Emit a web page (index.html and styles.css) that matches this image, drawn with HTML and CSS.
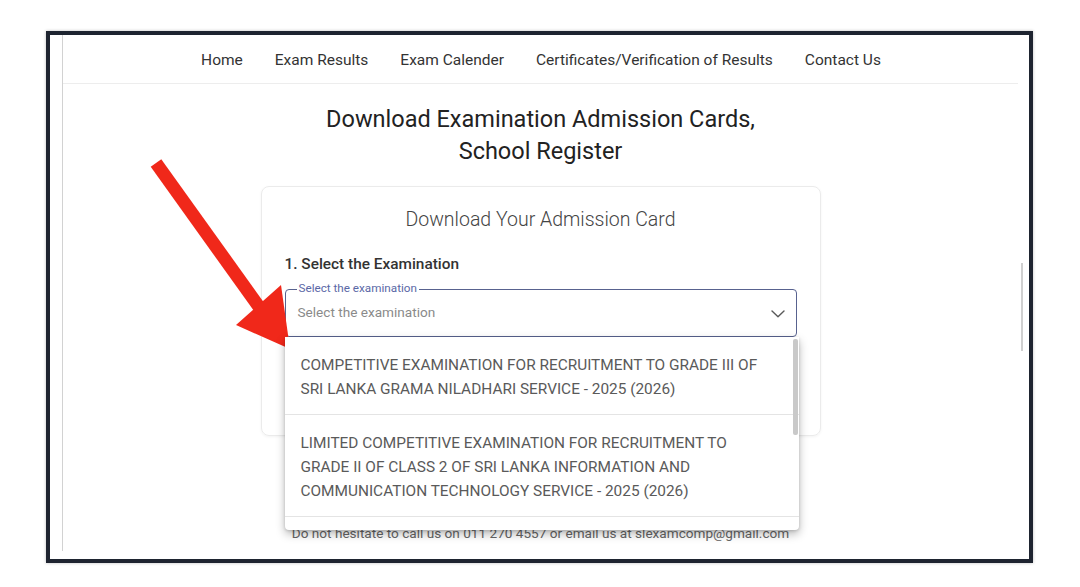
FILE: index.html
```html
<!DOCTYPE html>
<html lang="en">
<head>
<meta charset="utf-8">
<title>Download Examination Admission Cards</title>
<link rel="stylesheet" href="styles.css">
</head>
<body>
<div class="frame">
  <div class="gutter"></div>
  <div class="page">
    <nav class="nav">
      <a>Home</a>
      <a>Exam Results</a>
      <a>Exam Calender</a>
      <a>Certificates/Verification of Results</a>
      <a>Contact Us</a>
    </nav>
    <h1 class="title">Download Examination Admission Cards, School Register</h1>
    <section class="card">
      <h2 class="card-title">Download Your Admission Card</h2>
      <div class="label">1. Select the Examination</div>
      <div class="select-wrap">
        <div class="select">
          <span class="legend">Select the examination</span>
          <span class="placeholder">Select the examination</span>
          <svg class="chev" width="16" height="10" viewBox="0 0 16 10"><path d="M2 2 L8 7.8 L14 2" fill="none" stroke="#5a5a5a" stroke-width="1.4" stroke-linecap="round" stroke-linejoin="round"/></svg>
        </div>
        <div class="menu">
          <div class="item item-1">COMPETITIVE EXAMINATION FOR RECRUITMENT TO GRADE III OF SRI LANKA GRAMA NILADHARI SERVICE - 2025 (2026)</div>
          <div class="item item-2">LIMITED COMPETITIVE EXAMINATION FOR RECRUITMENT TO GRADE II OF CLASS 2 OF SRI LANKA INFORMATION AND COMMUNICATION TECHNOLOGY SERVICE - 2025 (2026)</div>
          <div class="item">LIMITED COMPETITIVE EXAMINATION</div>
          <div class="menu-thumb"></div>
        </div>
      </div>
    </section>
    <p class="footer">Do not hesitate to call us on 011 270 4557 or email us at slexamcomp@gmail.com</p>
  </div>
  <div class="scroll"><div class="scroll-thumb"></div></div>
</div>
<svg class="arrow" width="1080" height="587" viewBox="0 0 1080 587">
  <line x1="156" y1="163" x2="262" y2="311" stroke="#f0281a" stroke-width="13"/>
  <polygon points="236,325 281,285 290,349" fill="#f0281a"/>
</svg>
</body>
</html>
```
FILE: styles.css
```css
* { box-sizing: border-box; }
html, body { margin: 0; padding: 0; background: #fff; }
body {
  font-family: Roboto, "Liberation Sans", Arial, sans-serif;
  padding: 31px 0 0 46px;
  width: 1080px;
  height: 587px;
  overflow: hidden;
  position: relative;
}
.frame {
  width: 987px;
  height: 532px;
  border: 4px solid #1e2430;
  box-shadow: 0 0 3px rgba(0,0,0,0.25);
  display: flex;
  background: #fff;
}
.gutter { width: 12px; flex: none; }
.page {
  flex: 1;
  border-left: 1px solid #d2d2d2;
  margin-bottom: 8px;
  display: flex;
  flex-direction: column;
  align-items: center;
}
.nav {
  align-self: stretch;
  height: 49px;
  padding-top: 2px;
  border-bottom: 1px solid #ededed;
  display: flex;
  justify-content: center;
  align-items: center;
  gap: 31px;
  font-size: 15.5px;
  color: #333;
}
.nav a { display: block; line-height: 20px; padding-left: 1px; }
.title {
  margin: 19px 0 0;
  max-width: 480px;
  text-align: center;
  font-size: 23.5px;
  line-height: 32px;
  font-weight: 400;
  color: #222;
}
.card {
  margin-top: 19px;
  width: 560px;
  border: 1px solid #ebebeb;
  border-radius: 8px;
  box-shadow: 0 1px 3px rgba(0,0,0,0.05);
  padding: 21px 23px 98px;
}
.card-title {
  margin: 0;
  text-align: center;
  font-size: 19.5px;
  line-height: 24px;
  font-weight: 300;
  color: #444;
}
.label {
  margin-top: 22px;
  font-size: 15.4px;
  line-height: 20px;
  font-weight: 500;
  color: #333;
}
.select-wrap { position: relative; margin-top: 15px; }
.select {
  position: relative;
  height: 48px;
  border: 1.5px solid #58628f;
  border-radius: 4px;
  display: flex;
  align-items: center;
  justify-content: space-between;
  padding: 0 10px 2px 12px;
}
.legend {
  position: absolute;
  top: -8px;
  left: 11px;
  padding: 0 2px;
  background: #fff;
  font-size: 11.7px;
  line-height: 13px;
  color: #5a68a6;
}
.placeholder { font-size: 13.6px; color: #8a8a8a; }
.chev { display: block; margin-top: 3px; }
.menu {
  position: absolute;
  top: 48px;
  left: 0;
  width: 514px;
  height: 193px;
  overflow: hidden;
  background: #fff;
  box-shadow: 0 4px 10px rgba(0,0,0,0.28), 0 1px 3px rgba(0,0,0,0.15);
  border-radius: 0 0 4px 4px;
  z-index: 5;
}
.item {
  padding: 16px 26px 13px 16px;
  border-bottom: 1px solid #e4e4e4;
  font-size: 15.4px;
  line-height: 24px;
  color: #5a5a5a;
}
.menu-thumb {
  position: absolute;
  top: 2px;
  right: 1px;
  width: 5px;
  height: 96px;
  background: #c9c9c9;
  border-radius: 2px;
}
.footer {
  margin: 89px 0 0;
  font-size: 13.6px;
  line-height: 16px;
  color: #666;
  text-align: center;
}
.scroll { width: 11px; flex: none; position: relative; }
.scroll-thumb {
  margin: 228px 0 0 3px;
  width: 2px;
  height: 88px;
  background: #cfcfcf;
}
.arrow { position: absolute; left: 0; top: 0; pointer-events: none; }
```
